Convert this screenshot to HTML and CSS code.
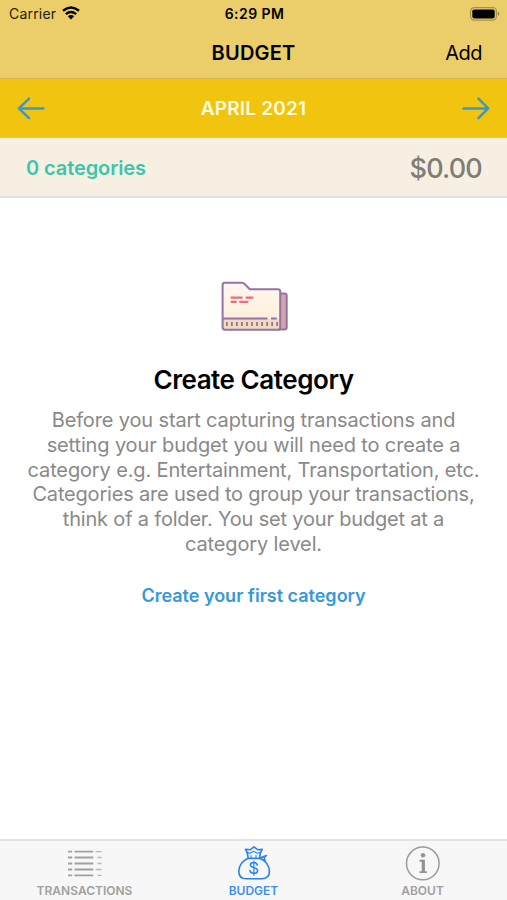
FILE: index.html
```html
<!DOCTYPE html>
<html lang="en">
<head>
<meta charset="utf-8">
<title>Budget</title>
<link rel="stylesheet" href="styles.css">
</head>
<body>
<div class="app">
  <header class="header">
    <div class="status">
      <div class="carrier"><span>Carrier</span>
        <svg class="wifi" width="18" height="14" viewBox="0 0 18 14"><g fill="none" stroke="#000" stroke-width="2.5"><path d="M1 4.7Q9-1.7 17 4.7"/><path d="M3.9 8.1Q9 3.9 14.1 8.1"/></g><path d="M5.8 10.2Q9 7.6 12.2 10.2L9 13.5z"/></svg>
      </div>
      <div class="time">6:29 PM</div>
      <svg class="battery" width="30" height="14" viewBox="0 0 30 14"><rect x=".6" y=".7" width="25.8" height="12.4" rx="3.6" fill="none" stroke="#a8924a" stroke-width="1.2"/><rect x="2.3" y="2.5" width="22.4" height="8.9" rx="1.8"/><path d="M27.8 4.8q3.2 2.1 0 4.2z" fill="#93803f"/></svg>
    </div>
    <div class="nav"><h1>BUDGET</h1><span class="add">Add</span></div>
  </header>
  <div class="month">
    <svg width="28" height="24" viewBox="0 0 28 24"><path d="M26.4 12.400H1.900M12 2.600L1.900 12.400l10.100 9.800" class="arrow"/></svg>
    <span>APRIL 2021</span>
    <svg width="28" height="24" viewBox="0 0 28 24"><path d="M1.500 12.400H26M16.400 2.600L26.200 12.400l-9.800 9.800" class="arrow"/></svg>
  </div>
  <div class="summary"><span class="count">0 categories</span><span class="amount">$0.00</span></div>
  <main class="empty">
    <svg class="folder" width="68" height="52" viewBox="0 0 68 52">
      <defs><linearGradient id="paper" x2="0" y2="1"><stop offset="0" stop-color="#fff8ef"/><stop offset="1" stop-color="#fcecd5"/></linearGradient></defs>
      <path d="M58 12.500h5.500q2.200 0 2.200 2.200v31.500q0 2.200-2.200 2.200H58z" fill="#d4a4a9" stroke="#9473a5" stroke-width="2"/>
      <path d="M4 1.800h16.800q1.800 0 2.900 1.200l5 5.200h28.100q2.400 0 2.400 2.300v35.900q0 2.300-2.300 2.300H4q-2.400 0-2.400-2.400V4.200Q1.600 1.800 4 1.800z" fill="url(#paper)"/>
      <path d="M2 38h57v10H2z" fill="#f0dac0"/>
      <path d="M5 42.900h52" stroke="#946e95" stroke-width="4" stroke-dasharray="1.700 3.330" fill="none"/>
      <path d="M2 37.600h44.500M50 37.600h5.700" stroke="#9473a5" stroke-width="2"/>
      <path d="M4 1.800h16.800q1.800 0 2.900 1.200l5 5.200h28.100q2.400 0 2.400 2.300v35.900q0 2.300-2.300 2.300H4q-2.400 0-2.400-2.400V4.200Q1.600 1.800 4 1.800z" fill="none" stroke="#9473a5" stroke-width="2"/>
      <path d="M10.500 16.700h10.300M25.500 16.700h6M10.500 20.800h4.300M19 20.800h7.500" stroke="#ef6b82" stroke-width="2.200" stroke-linecap="round"/>
    </svg>
    <h2>Create Category</h2>
    <p>Before you start capturing transactions and<br>setting your budget you will need to create a<br>category e.g. Entertainment, Transportation, etc.<br><span class="snug">Categories are used to group your transactions,</span><br><span class="snug">think of a folder. You set your budget at a</span><br>category level.</p>
    <a class="create">Create your first category</a>
  </main>
  <nav class="tabs">
    <div class="tab">
      <svg width="36" height="36" viewBox="0 0 36 36"><g fill="none" stroke="#a0a0a0"><path stroke-width="1.900" d="M1 5.600h4.200M1 11.500h4.200M1 17.500h4.200M1 23.500h4.200M1 29.400h4.200M7.500 5.600h18.800M7.500 11.500h18.800M7.500 17.500h18.800M7.500 23.500h18.800M7.500 29.400h18.800"/><path stroke="#b8b8b8" stroke-width="1.400" d="M28.600 5.600h6M30.600 11.500h4M30.600 17.500h4M28.600 23.500h6M30.600 29.400h4"/></g></svg>
      <span class="label">TRANSACTIONS</span>
    </div>
    <div class="tab active">
      <svg width="36" height="36" viewBox="0 1 36 36"><g fill="none" stroke="#2583ef" stroke-width="1.600" stroke-linejoin="round" stroke-linecap="round"><path d="M11.800 13.400C6.400 15.500 2.800 21 2.800 26.200q0 7.600 7.600 7.600h15.500q7.500 0 7.500-7.500c0-5.400-3.700-10.800-9.200-12.900z"/><path d="M12 13.200Q12.300 8.200 9.500 4.300l4.600.5 3.800-2.900 4 2.900 4.300-.4Q23.300 8.600 23.800 13.200"/><path stroke-width="1.100" d="M11 7.400l3 .8 3.500-2 3.700 2 3.500-.9M15 10.600v2M20 10.400v2.200M24 12.500l6.800-2.300-2.700 3.200 1.500 1.900-6-1.800M25.500 12.600l3-.6"/><path stroke-width="1.500" d="M21.300 20q-.7-2.500-3.500-2.500-3.400 0-3.400 2.500c0 3.300 7.200 1.900 7.200 5.400 0 1.900-1.500 2.900-3.700 2.900-2.500 0-3.700-1-4-2.900"/><path stroke-width="1.200" d="M17.900 16v14.300"/></g></svg>
      <span class="label">BUDGET</span>
    </div>
    <div class="tab">
      <svg width="36" height="36" viewBox="0 0 36 36"><circle cx="17.800" cy="17.400" r="16.300" fill="none" stroke="#9c9c9c" stroke-width="1.500"/><circle cx="18" cy="9.300" r="2.200" fill="#929292"/><path d="M14.500 13.800h5.400v11.400h2v1.900h-7.300v-1.900h2.100v-9.500h-2.200z" fill="#929292"/></svg>
      <span class="label">ABOUT</span>
    </div>
  </nav>
</div>
</body>
</html>
```
FILE: styles.css
```css
* { box-sizing: border-box; }
body { margin: 0; font-family: Inter, "Liberation Sans", sans-serif; background: #fff; color: #000; }
h1, h2, p { margin: 0; }
svg { display: block; flex: none; }
.app { height: 900px; display: flex; flex-direction: column; overflow: hidden; }
.header { height: 79px; background: #ebcd69; border-bottom: 1px solid #d8b64a; flex: none; }
.status { height: 27px; display: grid; grid-template-columns: 1fr auto 1fr; align-items: center; padding: 0 7px 0 9px; }
.carrier { display: flex; align-items: center; gap: 6px; font-size: 14px; letter-spacing: .2px; color: #26210f; }
.wifi { margin-top: -2px; }
.time { font-size: 14px; font-weight: 600; letter-spacing: .45px; }
.battery { justify-self: end; }
.nav { height: 51px; display: grid; grid-template-columns: 1fr auto 1fr; align-items: center; padding: 0 25px; }
.nav h1 { grid-column: 2; font-size: 20px; font-weight: 600; line-height: 24px; letter-spacing: .2px; }
.add { justify-self: end; font-size: 20px; letter-spacing: -.5px; }
.month { height: 59px; flex: none; display: flex; align-items: center; justify-content: space-between; padding: 0 17px; background: #f1c40f; border-bottom: 1px solid #dfc66a; color: #fffbe0; font-size: 19px; font-weight: 600; letter-spacing: .2px; }
.arrow { fill: none; stroke: #3c98c8; stroke-width: 2.5; stroke-linecap: round; stroke-linejoin: round; }
.summary { height: 60px; flex: none; display: flex; align-items: center; justify-content: space-between; padding: 2px 25px 0 26px; background: #f7f0e2; border-bottom: 2px solid #e2e1ea; }
.count { color: #3bc6ac; font-size: 20px; font-weight: 600; letter-spacing: -.1px; }
.amount { color: #807c76; font-size: 27px; font-weight: 500; letter-spacing: -.8px; }
.empty { flex: 1; display: flex; flex-direction: column; align-items: center; padding-top: 83px; text-align: center; }
.folder { margin-left: 3px; }
.empty h2 { margin-top: 30px; font-size: 26px; font-weight: 600; line-height: 34px; letter-spacing: -.45px; }
.empty p { margin-top: 11px; color: #898989; font-size: 20px; line-height: 24.8px; letter-spacing: -.14px; white-space: nowrap; }
.snug { letter-spacing: -.19px; }
.create { margin-top: 27px; color: #3498db; font-size: 18px; font-weight: 600; line-height: 24px; }
.tabs { height: 61px; flex: none; display: grid; grid-template-columns: repeat(3, 1fr); background: #f7f7f7; border-top: 2px solid #e3e3e3; }
.tab { display: flex; flex-direction: column; align-items: center; padding-top: 5px; color: #a0a0a0; font-size: 12px; font-weight: 600; }
.label { line-height: 14px; margin-top: 2px; }
.active { color: #3d8ff0; }
```
